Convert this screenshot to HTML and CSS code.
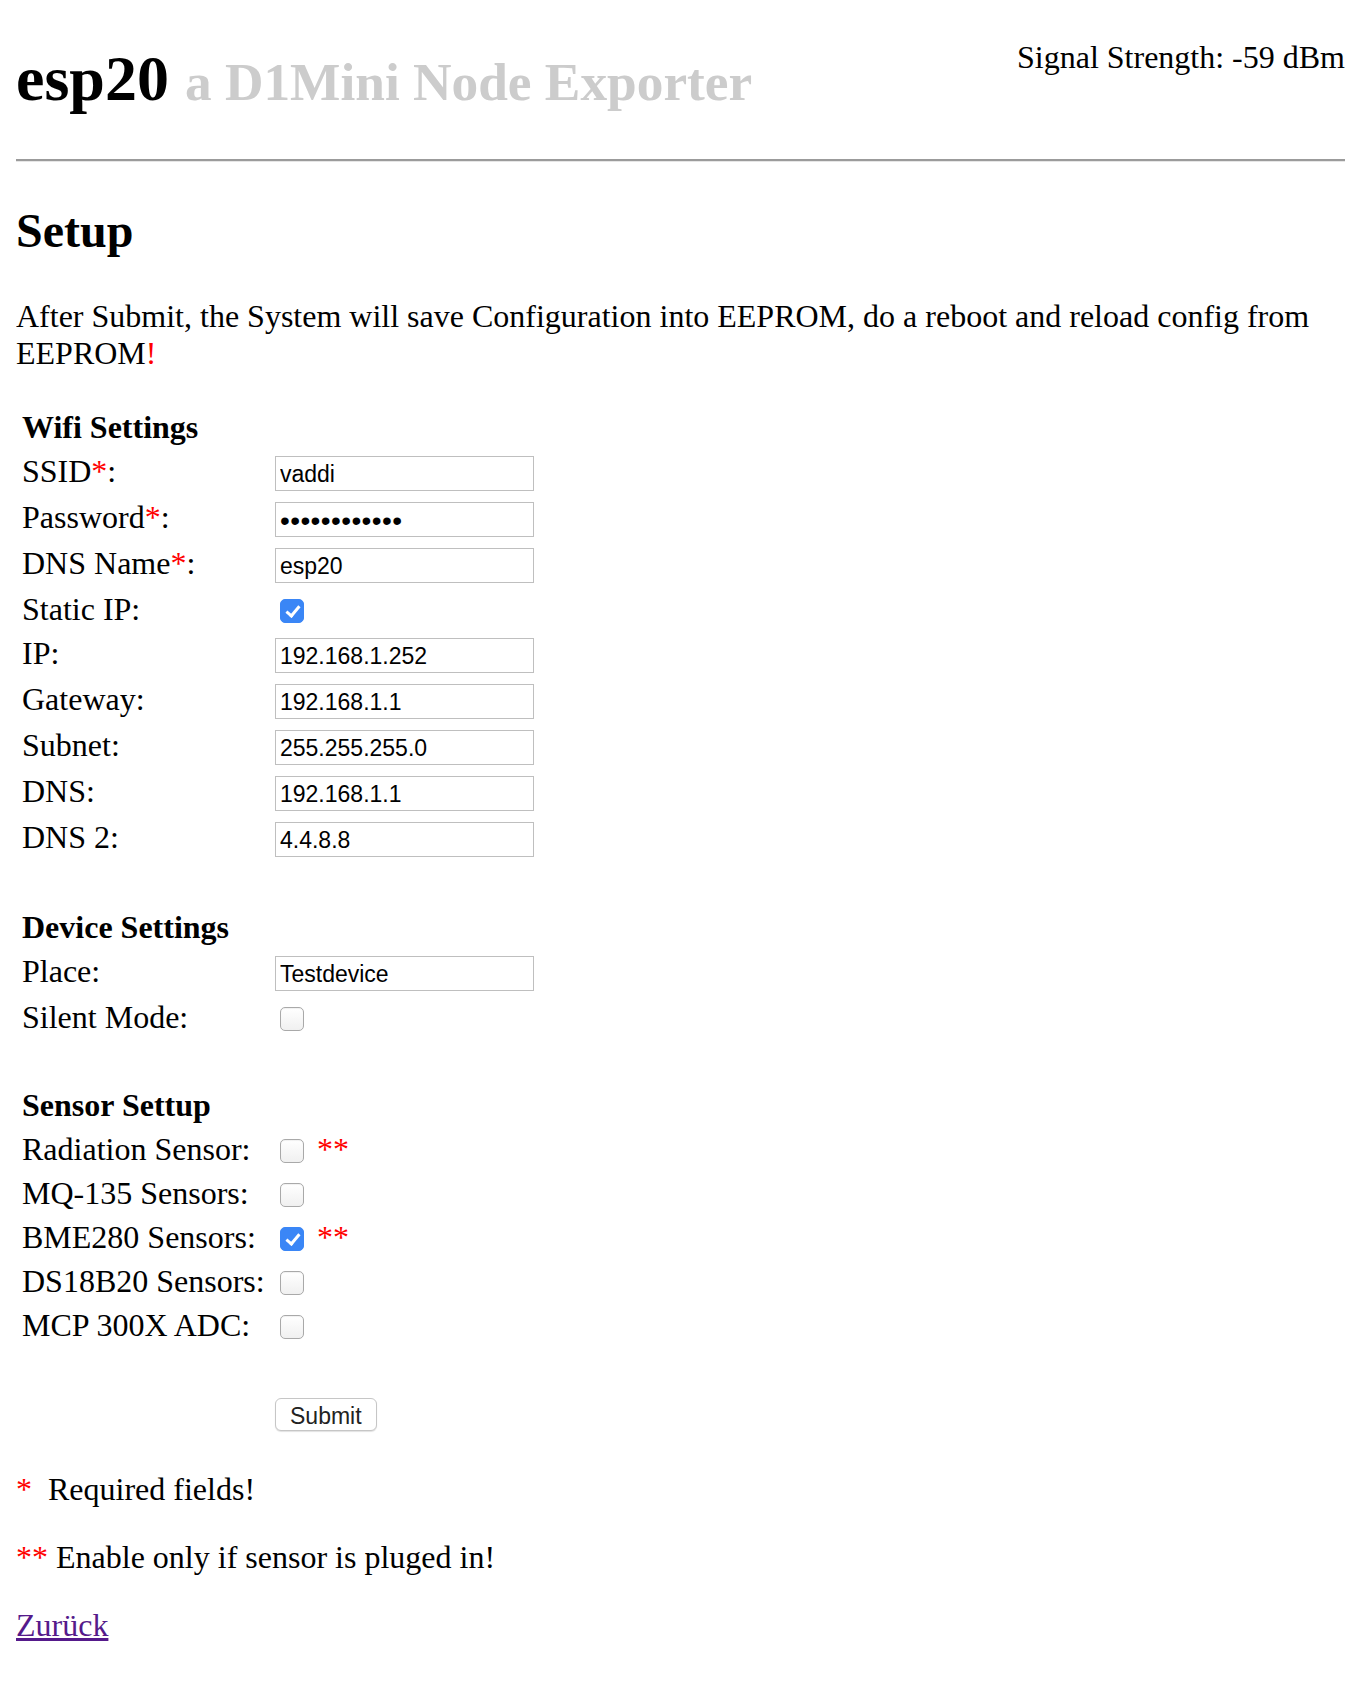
FILE: index.html
```html
<!DOCTYPE html>
<html lang="de">
<head>
<meta charset="utf-8">
<title>esp20 Setup</title>
<link rel="stylesheet" href="styles.css">
</head>
<body>
<header class="top">
  <h1 class="title">esp20 <small class="subtitle">a D1Mini Node Exporter</small></h1>
  <div class="signal">Signal Strength: -59 dBm</div>
</header>
<hr class="rule">
<h2 class="section-title">Setup</h2>
<p class="text">After Submit, the System will save Configuration into EEPROM, do a reboot and reload config from EEPROM<span class="red">!</span></p>
<form class="setup" action="#" method="post">
<table class="grid">
  <tr><td class="group" colspan="2">Wifi Settings</td></tr>
  <tr><td class="label">SSID<span class="red">*</span>:</td><td><input class="field" type="text" name="ssid" value="vaddi"></td></tr>
  <tr><td class="label">Password<span class="red">*</span>:</td><td><input class="field pass" type="password" name="password" value="xxxxxxxxxxxx"></td></tr>
  <tr><td class="label">DNS Name<span class="red">*</span>:</td><td><input class="field" type="text" name="dnsname" value="esp20"></td></tr>
  <tr><td class="label">Static IP:</td><td><input class="check" type="checkbox" name="static" checked></td></tr>
  <tr><td class="label">IP:</td><td><input class="field" type="text" name="ip" value="192.168.1.252"></td></tr>
  <tr><td class="label">Gateway:</td><td><input class="field" type="text" name="gateway" value="192.168.1.1"></td></tr>
  <tr><td class="label">Subnet:</td><td><input class="field" type="text" name="subnet" value="255.255.255.0"></td></tr>
  <tr><td class="label">DNS:</td><td><input class="field" type="text" name="dns" value="192.168.1.1"></td></tr>
  <tr><td class="label">DNS 2:</td><td><input class="field" type="text" name="dns2" value="4.4.8.8"></td></tr>
  <tr><td colspan="2">&nbsp;</td></tr>
  <tr><td class="group" colspan="2">Device Settings</td></tr>
  <tr><td class="label">Place:</td><td><input class="field" type="text" name="place" value="Testdevice"></td></tr>
  <tr><td class="label">Silent Mode:</td><td><input class="check" type="checkbox" name="silent"></td></tr>
  <tr><td colspan="2">&nbsp;</td></tr>
  <tr><td class="group" colspan="2">Sensor Settup</td></tr>
  <tr><td class="label">Radiation Sensor:</td><td><input class="check" type="checkbox" name="radiation"> <span class="red">**</span></td></tr>
  <tr><td class="label">MQ-135 Sensors:</td><td><input class="check" type="checkbox" name="mq135"></td></tr>
  <tr><td class="label">BME280 Sensors:</td><td><input class="check" type="checkbox" name="bme280" checked> <span class="red">**</span></td></tr>
  <tr><td class="label">DS18B20 Sensors:</td><td><input class="check" type="checkbox" name="ds18b20"></td></tr>
  <tr><td class="label">MCP 300X ADC:</td><td><input class="check" type="checkbox" name="mcp300x"></td></tr>
  <tr><td colspan="2">&nbsp;</td></tr>
  <tr><td class="label">&nbsp;</td><td><input class="btn" type="submit" value="Submit"></td></tr>
</table>
</form>
<p class="note"><span class="red">*</span>&nbsp; Required fields!</p>
<p class="note"><span class="red">**</span> Enable only if sensor is pluged in!</p>
<p class="note"><a class="back" href="#">Zurück</a></p>
</body>
</html>
```

FILE: styles.css
```css
html {
  background: #fff;
}

body {
  margin: 16px;
  font-family: "Liberation Serif", "Times New Roman", serif;
  font-size: 32px;
  line-height: 36px;
  color: #000;
}

.top {
  display: flex;
  justify-content: space-between;
  align-items: flex-start;
}

.title {
  margin: 27px 0 44px;
  font-size: 64px;
  line-height: 72px;
  font-weight: bold;
}

.subtitle {
  font-size: 53.33px;
  line-height: 1;
  color: #cccccc;
}

.signal {
  margin-top: 22.5px;
  white-space: nowrap;
}

.rule {
  height: 0;
  margin: 0;
  border: 0;
  border-top: 2px solid #9b9b9b;
  border-bottom: 1px solid #e6e6e6;
}

.section-title {
  margin: 42px 0 40px;
  font-size: 48px;
  line-height: 54px;
  font-weight: bold;
}

.text {
  margin: 32px 0 31px;
  line-height: 36.8px;
}

.red {
  color: #ff0000;
}

.setup {
  margin: 0;
}

.grid {
  border-collapse: separate;
  border-spacing: 4px;
}

.grid td {
  padding: 2px;
  vertical-align: baseline;
}

.label {
  width: 245px;
  white-space: nowrap;
}

.group {
  font-weight: bold;
}

.field {
  box-sizing: border-box;
  width: 259px;
  height: 35px;
  margin: 0;
  padding: 2px 4px 0;
  border: 1px solid #bfbfbf;
  border-radius: 0;
  background: #fff;
  color: #000;
  font: 23px "Liberation Sans", Arial, sans-serif;
  vertical-align: baseline;
  outline: none;
}

.pass {
  padding-top: 4px;
  font-size: 28px;
  letter-spacing: 0.4px;
  vertical-align: -2.6px;
}

.check {
  -webkit-appearance: none;
  appearance: none;
  position: relative;
  box-sizing: border-box;
  width: 24px;
  height: 24px;
  margin: 0 5px;
  border: 1px solid #a9a9a9;
  border-radius: 5px;
  background: linear-gradient(#ffffff, #f0f0f0);
  box-shadow: inset 0 1px 1px rgba(0, 0, 0, 0.06);
  vertical-align: -3.7px;
}

.check:checked {
  border-color: #3a86f6;
  background: #3a86f6;
  box-shadow: none;
}

.check:checked::after {
  content: "";
  position: absolute;
  left: 7.5px;
  top: 3px;
  width: 5px;
  height: 11px;
  border: solid #fff;
  border-width: 0 3px 3px 0;
  transform: rotate(40deg);
}

.btn {
  box-sizing: border-box;
  height: 33px;
  margin: 0 0 1.5px;
  padding: 3px 14px 0;
  border: 1px solid #c6c6c6;
  border-radius: 6px;
  background: #fff;
  box-shadow: 0 1px 1px rgba(0, 0, 0, 0.12);
  color: #222;
  font: 23px "Liberation Sans", Arial, sans-serif;
  vertical-align: baseline;
}

.note {
  margin: 32px 0;
}

.back {
  color: #551a8b;
  text-decoration: underline;
}
```
